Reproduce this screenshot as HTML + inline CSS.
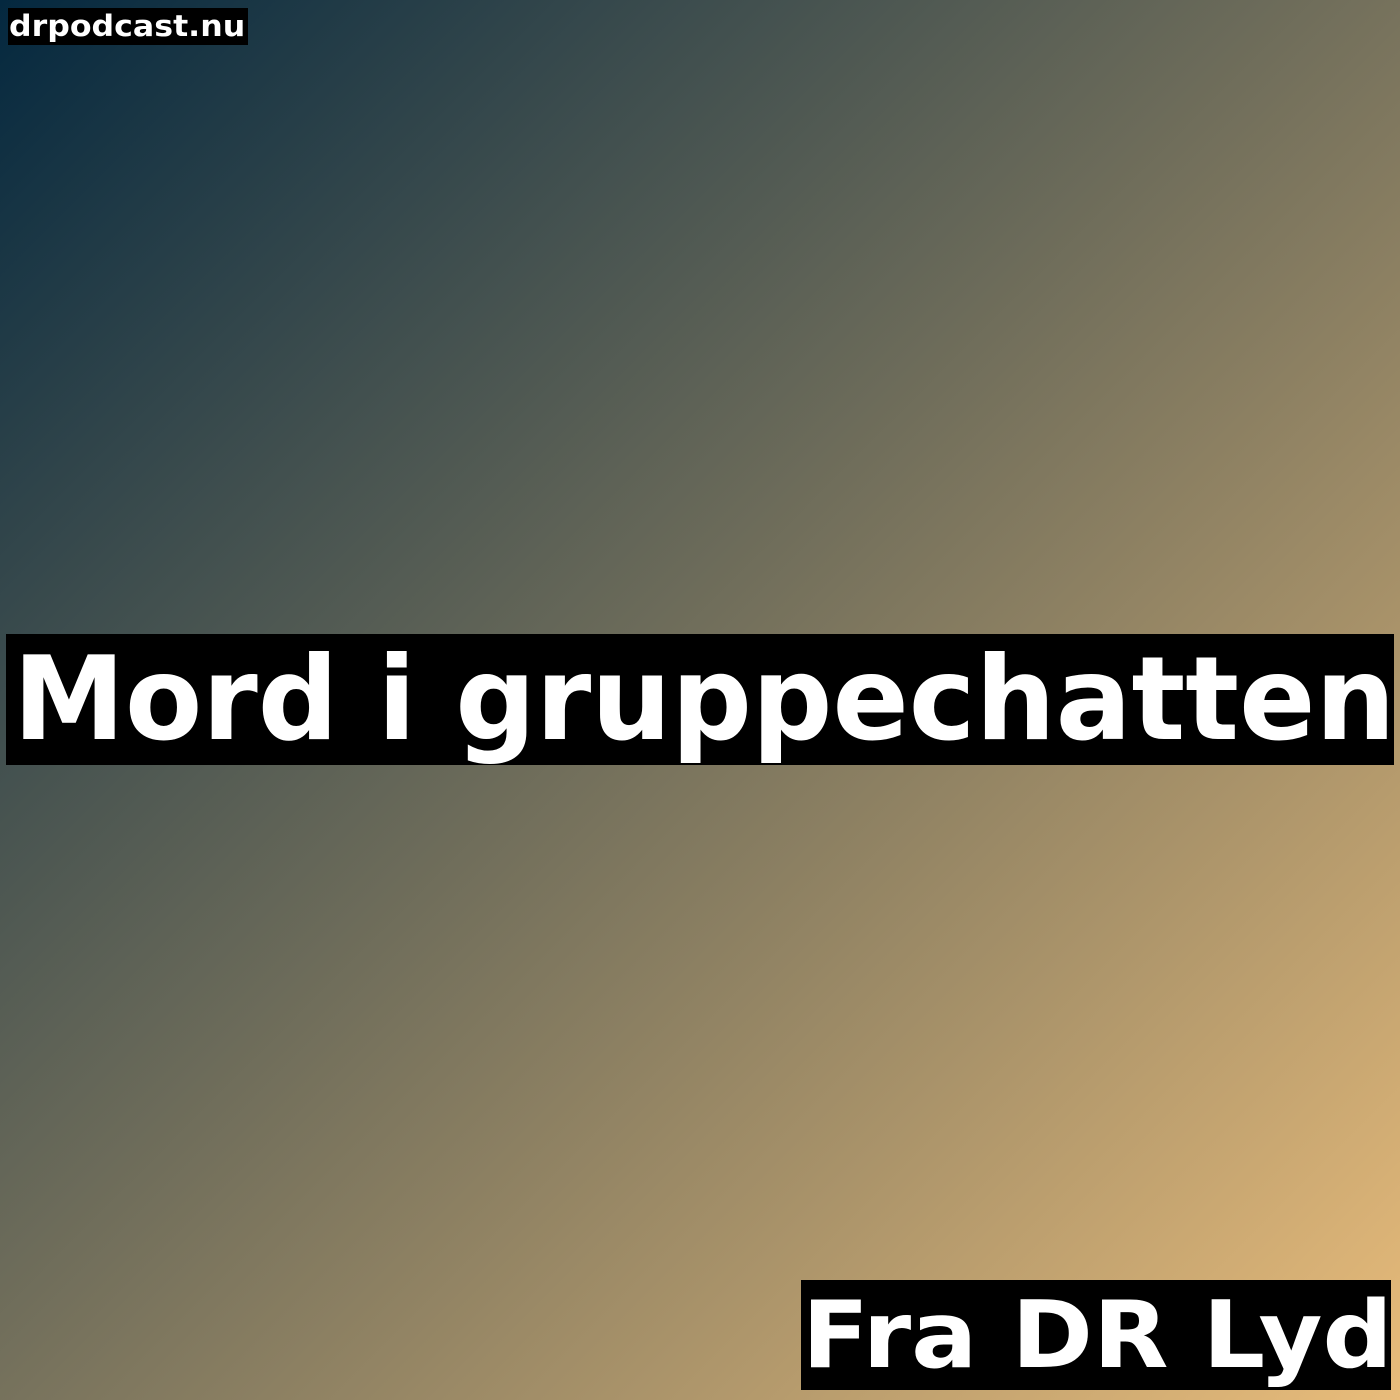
<!DOCTYPE html>
<html><head><meta charset="utf-8"><style>
html,body{margin:0;padding:0;}
body{width:1400px;height:1400px;overflow:hidden;position:relative;
background:linear-gradient(135deg,#04283f 0%,#e9bc7a 100%);
font-family:"DejaVu Sans","Liberation Sans",sans-serif;font-weight:bold;color:#fff;}
.b{position:absolute;background:#000;white-space:nowrap;box-sizing:border-box;overflow:hidden;}
.b span{display:inline-block;transform-origin:0 50%;}
</style></head><body>
<div class="b" style="left:8px;top:8px;width:240px;height:37px;font-size:29px;line-height:37px;padding-left:1px;"><span style="transform:scaleX(1.09)">drpodcast.nu</span></div>
<div class="b" style="left:6px;top:634px;width:1388px;height:131px;font-size:116px;line-height:131px;padding-left:7px;"><span style="transform:scaleX(0.97)">Mord i gruppechatten</span></div>
<div class="b" style="left:801px;top:1280px;width:590px;height:110px;font-size:93px;line-height:110px;padding-left:1px;"><span style="transform:scaleX(1.055)">Fra DR Lyd</span></div>
</body></html>
